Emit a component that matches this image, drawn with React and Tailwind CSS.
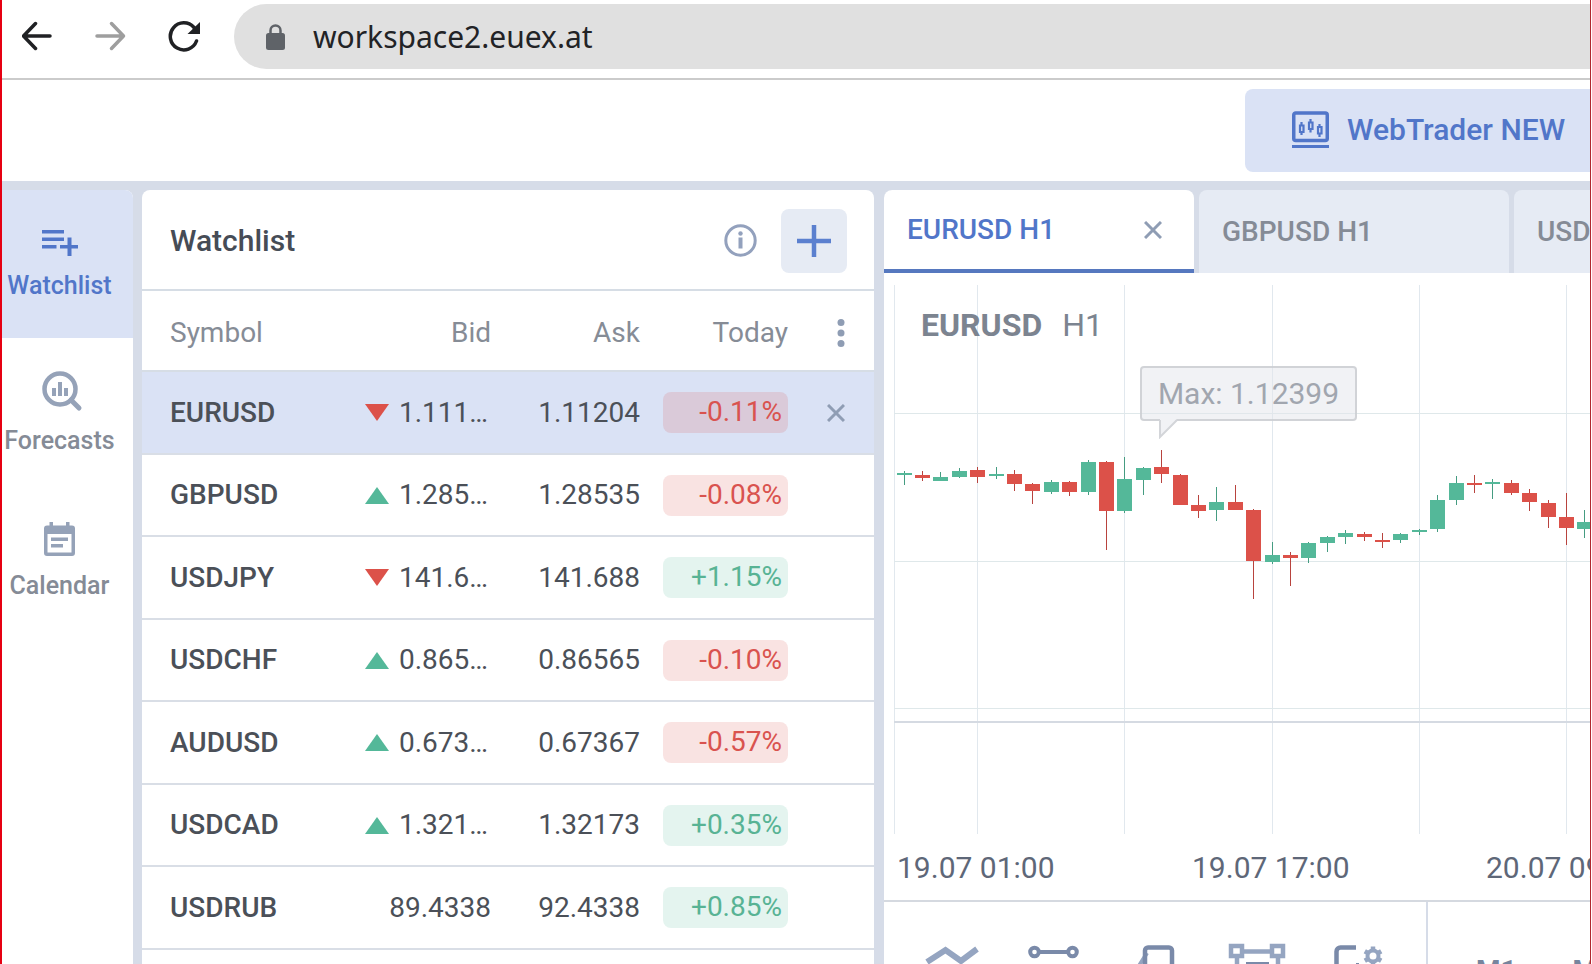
import React, { useState } from 'react';

const SYMBOLS = [
  { symbol: 'EURUSD', dir: 'down', bid: '1.111…', ask: '1.11204', today: '-0.11%' },
  { symbol: 'GBPUSD', dir: 'up', bid: '1.285…', ask: '1.28535', today: '-0.08%' },
  { symbol: 'USDJPY', dir: 'down', bid: '141.6…', ask: '141.688', today: '+1.15%' },
  { symbol: 'USDCHF', dir: 'up', bid: '0.865…', ask: '0.86565', today: '-0.10%' },
  { symbol: 'AUDUSD', dir: 'up', bid: '0.673…', ask: '0.67367', today: '-0.57%' },
  { symbol: 'USDCAD', dir: 'up', bid: '1.321…', ask: '1.32173', today: '+0.35%' },
  { symbol: 'USDRUB', dir: null, bid: '89.4338', ask: '92.4338', today: '+0.85%' },
];

// [x, body top, body bottom, high, low, rising]
const CANDLES = [
  [13, 200, 202, 198, 212, 1],
  [31, 202, 205, 198, 208, 0],
  [49, 204, 208, 199, 208, 1],
  [68, 198, 204, 195, 205, 1],
  [86, 197, 204, 194, 210, 0],
  [105, 201, 203, 194, 206, 1],
  [123, 201, 211, 197, 218, 0],
  [141, 211, 218, 210, 231, 0],
  [160, 209, 219, 207, 221, 1],
  [178, 209, 219, 208, 223, 0],
  [197, 189, 219, 187, 222, 1],
  [215, 189, 238, 188, 277, 0],
  [233, 206, 238, 184, 240, 1],
  [252, 195, 207, 194, 222, 1],
  [270, 194, 201, 177, 210, 0],
  [289, 202, 232, 201, 232, 0],
  [307, 232, 238, 222, 245, 0],
  [325, 229, 237, 214, 248, 1],
  [344, 229, 237, 212, 237, 0],
  [362, 237, 288, 236, 326, 0],
  [381, 282, 289, 269, 291, 1],
  [399, 282, 285, 279, 313, 0],
  [417, 270, 285, 269, 290, 1],
  [436, 264, 270, 263, 279, 1],
  [454, 260, 264, 257, 271, 1],
  [473, 261, 264, 259, 268, 0],
  [491, 267, 269, 260, 275, 0],
  [509, 261, 267, 260, 270, 1],
  [528, 257, 259, 256, 262, 1],
  [546, 227, 256, 222, 259, 1],
  [565, 210, 227, 203, 232, 1],
  [583, 210, 212, 202, 220, 0],
  [601, 209, 211, 206, 226, 1],
  [620, 210, 220, 207, 222, 0],
  [638, 220, 229, 216, 238, 0],
  [657, 230, 244, 227, 255, 0],
  [675, 244, 255, 220, 272, 0],
  [693, 249, 256, 237, 265, 1],
];

const GRID_X = [10, 93, 240, 388, 535, 682];
const GRID_Y = [140, 288, 435];

function CloseIcon() {
  return (
    <svg width="18" height="18" viewBox="0 0 18 18" fill="none" stroke="#8f9db4" strokeWidth="3">
      <path d="M1 1l16 16M17 1L1 17" />
    </svg>
  );
}

function BrowserBar() {
  return (
    <div className="flex h-20 items-start border-b-2 border-[#cbcbcb] bg-white pt-1">
      <div className="flex h-16 w-[232px] shrink-0 items-center gap-[42px] pl-5">
        <button type="button" aria-label="Back">
          <svg width="31" height="30" viewBox="0 0 31 30" fill="none" stroke="#202124" strokeWidth="3.500" strokeLinecap="round" strokeLinejoin="round">
            <path d="M28 15H1.500M13.500 2.500L1.500 15L13.500 27.500" />
          </svg>
        </button>
        <button type="button" aria-label="Forward">
          <svg width="31" height="30" viewBox="0 0 31 30" fill="none" stroke="#9e9e9e" strokeWidth="3.500" strokeLinecap="round" strokeLinejoin="round">
            <path d="M2 15H28.500M16.500 2.500L28.500 15L16.500 27.500" />
          </svg>
        </button>
        <button type="button" aria-label="Reload">
          <svg width="34" height="32" viewBox="0 0 34 32" fill="none">
            <path d="M28.500 21A13.500 13.500 0 1 1 26 7.500" stroke="#202124" strokeWidth="3.500" strokeLinecap="round" />
            <path d="M32 2v12H19.500z" fill="#202124" />
          </svg>
        </button>
      </div>
      <div className="flex h-[65px] flex-1 items-center gap-7 rounded-l-full bg-[#e0e0e0] pl-8">
        <svg width="19" height="26" viewBox="0 0 19 26" fill="none" className="shrink-0">
          <rect y="9" width="19" height="17" rx="2.500" fill="#5f6368" />
          <path d="M4.500 10V6.500a5 5 0 0 1 10 0V10" stroke="#5f6368" strokeWidth="2.500" />
        </svg>
        <input
          aria-label="Address"
          defaultValue="workspace2.euex.at"
          className="min-w-0 flex-1 bg-transparent font-['Noto_Sans'] text-[30px] leading-9 text-[#222326] outline-none"
        />
      </div>
    </div>
  );
}

function TopBar() {
  return (
    <header className="flex h-[101px] items-center justify-end bg-white">
      <button type="button" className="flex h-[83px] w-[345px] items-center gap-[18px] rounded-l-lg bg-[#dae2f5] pb-0.5 pl-[47px] text-[30px] font-medium text-[#5176c9]">
        <svg width="37" height="37" viewBox="0 0 37 37" fill="none" stroke="#5176c9">
          <rect x="1.750" y="2" width="33.500" height="27.500" rx="2" strokeWidth="3.500" />
          <path d="M0 35.500h37" strokeWidth="3" />
          <path d="M9.500 11v3M9.500 21v3M18.500 8v3M18.500 18v3.500M27.500 13v3M27.500 22.500v3.500" strokeWidth="2.200" />
          <path d="M8 14.500h3.500v6.500H8zM17 11.500h3.500v6.500H17zM26 16h3.500v6.500H26z" strokeWidth="2.200" />
        </svg>
        WebTrader NEW
      </button>
    </header>
  );
}

function NavIcon({ name }) {
  if (name === 'Watchlist') {
    return (
      <svg width="36" height="26" viewBox="0 0 36 26" fill="#5176c9">
        <path d="M0 0h22v3.500H0zM0 7.500h22V11H0zM0 15h14.500v3.500H0z" />
        <path d="M25.500 7.500h4V15H36v3.500h-6.500V26h-4v-7.500H18V15h7.500z" />
      </svg>
    );
  }
  if (name === 'Forecasts') {
    return (
      <svg width="40" height="40" viewBox="-2 0 40 40" fill="none" stroke="#95a2b8" className="overflow-visible">
        <circle cx="18" cy="18" r="15.500" strokeWidth="4.500" />
        <path d="M29 29l8 8" strokeWidth="5" strokeLinecap="round" />
        <path d="M12 17v8M18 11v14M24 17v8" strokeWidth="4" />
      </svg>
    );
  }
  return (
    <svg width="31" height="34" viewBox="0 0 31 34">
      <path
        fill="#95a2b8"
        fillRule="evenodd"
        d="M5.500 0h3.500v3.500h13V0h3.500v3.500H28a3 3 0 0 1 3 3V31a3 3 0 0 1-3 3H3a3 3 0 0 1-3-3V6.500a3 3 0 0 1 3-3h2.500zM3.500 12v18.500h24V12zM7 15.500h17V19H7zM7 22h12v3.500H7z"
      />
    </svg>
  );
}

function Sidebar({ active, onSelect }) {
  return (
    <nav className="mr-[9px] w-[131px] shrink-0 overflow-hidden rounded-tr-lg bg-white">
      {['Watchlist', 'Forecasts', 'Calendar'].map((name) => (
        <button
          key={name}
          type="button"
          onClick={() => onSelect(name)}
          className={
            'flex h-[148px] w-full flex-col items-center justify-center gap-[18px] pr-4 text-[25px] leading-6 font-medium ' +
            (name === active ? 'bg-[#dae2f5] text-[#5176c9]' : 'text-[#858b96]')
          }
        >
          <NavIcon name={name} />
          {name}
        </button>
      ))}
    </nav>
  );
}

function Arrow({ dir }) {
  return (
    <svg width="24" height="17" viewBox="0 0 24 17" className="shrink-0">
      {dir === 'up' ? <path d="M0 17L12 0l12 17z" fill="#54b899" /> : <path d="M0 0h24L12 17z" fill="#dc5149" />}
    </svg>
  );
}

function Watchlist() {
  const [selected, setSelected] = useState('EURUSD');

  return (
    <section className="mr-2.5 w-[732px] shrink-0 overflow-hidden rounded-t-lg bg-white">
      <div className="flex h-[101px] items-center border-b-2 border-[#d6dde5] pt-0.5 pr-[27px] pl-7">
        <h2 className="flex-1 text-[30px] font-medium text-[#464c56]">Watchlist</h2>
        <button type="button" aria-label="Info" className="mr-6">
          <svg width="33" height="33" viewBox="0 0 33 33" fill="#93a1bd">
            <circle cx="16.500" cy="16.500" r="14.700" fill="none" stroke="#93a1bd" strokeWidth="3" />
            <circle cx="16.500" cy="9.500" r="2.200" />
            <path d="M14.500 13.500h4v11h-4z" />
          </svg>
        </button>
        <button type="button" aria-label="Add symbol" className="flex h-16 w-[66px] items-center justify-center rounded-lg bg-[#e6ebf4]">
          <svg width="34" height="32" viewBox="0 0 34 32" stroke="#5b80cf" strokeWidth="4.500">
            <path d="M0 16h34M17 0v32" />
          </svg>
        </button>
      </div>

      <table className="w-full table-fixed border-collapse text-[28px] text-[#4b5058]">
        <colgroup>
          <col className="w-[216px]" />
          <col className="w-[133px]" />
          <col className="w-[149px]" />
          <col className="w-[148px]" />
          <col />
        </colgroup>
        <thead>
          <tr className="h-20 border-b-2 border-[#d6dde5] text-[#868c96]">
            <th scope="col" className="pt-1 pl-7 text-left font-normal">Symbol</th>
            <th scope="col" className="pt-1 text-right font-normal">Bid</th>
            <th scope="col" className="pt-1 text-right font-normal">Ask</th>
            <th scope="col" className="pt-1 text-right font-normal">Today</th>
            <th scope="col" className="pt-1 pr-[29px]">
              <button type="button" aria-label="Columns" className="ml-auto block">
                <svg width="8" height="28" viewBox="0 0 8 28" fill="#8f9db4">
                  <circle cx="4" cy="3.500" r="3.500" />
                  <circle cx="4" cy="14" r="3.500" />
                  <circle cx="4" cy="24.500" r="3.500" />
                </svg>
              </button>
            </th>
          </tr>
        </thead>
        <tbody>
          {SYMBOLS.map((row) => (
            <tr
              key={row.symbol}
              onClick={() => setSelected(row.symbol)}
              className={
                'border-b-2 border-[#d9dee6] odd:h-[83px] even:h-[82px] ' +
                (row.symbol === selected ? 'bg-[#dae2f5]' : '')
              }
            >
              <td className="pl-7 font-medium">{row.symbol}</td>
              <td>
                {row.dir ? (
                  <div className="flex items-center gap-2.5 pl-[7px]">
                    <Arrow dir={row.dir} />
                    <span>{row.bid}</span>
                  </div>
                ) : (
                  <div className="text-right">{row.bid}</div>
                )}
              </td>
              <td className="text-right">{row.ask}</td>
              <td>
                <div
                  className={
                    'ml-auto h-[41px] w-[125px] rounded-lg pr-1.5 text-right leading-10 ' +
                    (row.today[0] === '-' ? 'bg-[#dc5149]/16 text-[#d9534f]' : 'bg-[#54b899]/16 text-[#58b394]')
                  }
                >
                  {row.today}
                </div>
              </td>
              <td className="pr-[29px]">
                {row.symbol === selected && (
                  <button type="button" aria-label="Remove" className="ml-auto block">
                    <CloseIcon />
                  </button>
                )}
              </td>
            </tr>
          ))}
        </tbody>
      </table>
    </section>
  );
}

function Tabs() {
  return (
    <div className="flex h-[83px] gap-[5px] bg-[#d6dce8] text-[28px] font-medium">
      <div className="flex w-[310px] shrink-0 items-center justify-between rounded-t-lg border-b-4 border-[#5678bf] bg-white pr-8 pl-[23px]">
        <a href="#eurusd" className="text-[#5176c9]">EURUSD H1</a>
        <button type="button" aria-label="Close tab">
          <CloseIcon />
        </button>
      </div>
      <a href="#gbpusd" className="flex w-[310px] shrink-0 items-center rounded-t-lg bg-[#e6ebf4] pl-[23px] text-[#858b96]">GBPUSD H1</a>
      <a href="#usdjpy" className="flex w-[310px] shrink-0 items-center rounded-t-lg bg-[#e6ebf4] pl-[23px] text-[#858b96]">USDJPY H1</a>
    </div>
  );
}

function Chart() {
  return (
    <div className="relative h-[627px] overflow-hidden">
      <svg width="100%" height="561" shapeRendering="crispEdges" className="block">
        {GRID_X.map((x) => (
          <rect key={x} x={x} y="12" width="1" height="549" fill="#e1e8ee" />
        ))}
        {GRID_Y.map((y) => (
          <rect key={y} x="10" y={y} width="100%" height="1" fill="#dfe8ea" />
        ))}
        <rect x="10" y="448" width="100%" height="2" fill="#d5dae2" />
        {CANDLES.map(([x, top, bottom, high, low, rising]) => (
          <g key={x}>
            <rect x={x + 7} y={high} width="1" height={low - high} fill={rising ? '#459c81' : '#b8433e'} />
            <rect x={x} y={top} width="15" height={bottom - top} fill={rising ? '#54b899' : '#dc5149'} />
          </g>
        ))}
      </svg>

      <div className="absolute top-7 left-[37px] flex gap-5 text-[32px] leading-[48px] text-[#7c8490]">
        <strong className="font-bold">EURUSD</strong>
        <span>H1</span>
      </div>

      <div className="absolute top-[93px] left-64 flex h-[55px] w-[217px] items-center justify-center rounded border-2 border-[#c9ccd1]/80 bg-[#e3e5eb]/50 text-[30px] text-[#a1a6af]">
        Max: 1.12399
        <svg width="20" height="20" viewBox="0 0 20 20" className="absolute top-[51px] left-4">
          <path d="M2 0v17.500L19 0z" fill="#f1f2f5" />
          <path d="M2 1v17L19 1" fill="none" stroke="#d3d5d9" strokeWidth="2" />
        </svg>
      </div>

      <div className="flex pt-3.5 pl-[13px] text-[30px] leading-10 whitespace-nowrap text-[#5e6778]">
        <span className="w-[295px] shrink-0">19.07 01:00</span>
        <span className="w-[294px] shrink-0">19.07 17:00</span>
        <span className="w-[294px] shrink-0">20.07 09:00</span>
      </div>
    </div>
  );
}

const TOOLS = [
  {
    name: 'Chart type',
    icon: <path d="M1 17L19.500 5L35 16L51 4" stroke="#95a5c1" strokeWidth="6" />,
  },
  {
    name: 'Lines',
    icon: (
      <g stroke="#7a8aa9" strokeWidth="4">
        <circle cx="6.500" cy="7" r="4.300" />
        <circle cx="44.500" cy="7" r="4.300" />
        <path d="M11 7h29" />
      </g>
    ),
  },
  {
    name: 'Shapes',
    icon: (
      <g>
        <path d="M17 8L-3 40h20" stroke="#95a5c1" strokeWidth="4" />
        <rect x="15" y="2.500" width="27" height="40" rx="3" stroke="#7a8aa9" strokeWidth="4.500" />
      </g>
    ),
  },
  {
    name: 'Objects',
    icon: (
      <g>
        <path d="M9 6.500h33M5 12v30M46 12v30" stroke="#95a5c1" strokeWidth="4.500" />
        <rect x="-1" y="1" width="11" height="10" stroke="#95a5c1" strokeWidth="4.500" />
        <rect x="40" y="1" width="11" height="10" stroke="#95a5c1" strokeWidth="4.500" />
        <path d="M14 17h23v5H14z" fill="#7a8aa9" />
      </g>
    ),
  },
  {
    name: 'Chart settings',
    icon: (
      <g>
        <path d="M22 2.500H6.500a4 4 0 0 0-4 4V44h38V28" stroke="#7a8aa9" strokeWidth="4.500" />
        <path d="M22 18h3v10h-3z" fill="#7a8aa9" />
        <circle cx="39" cy="11" r="5.500" stroke="#95a5c1" strokeWidth="4" />
        <path d="M39 1.500v4M39 16.500v4M30.800 6.250l3.400 2M43.800 13.750l3.400 2M30.800 15.750l3.400-2M43.800 8.250l3.400-2" stroke="#95a5c1" strokeWidth="4.500" />
      </g>
    ),
  },
];

function Toolbar() {
  return (
    <div className="flex h-[140px] shrink-0 border-t-2 border-[#d5d9e0]">
      <div className="flex w-[544px] shrink-0 items-center justify-center border-r-2 border-[#d6dce8] pl-0.5">
        {TOOLS.map((tool) => (
          <button key={tool.name} type="button" aria-label={tool.name} className="flex h-full w-[102px] items-center justify-center">
            <svg width="52" height="52" viewBox="0 0 52 52" fill="none" className="overflow-visible">
              {tool.icon}
            </svg>
          </button>
        ))}
      </div>
      <div className="flex items-center gap-14 pl-12 text-[28px] font-bold text-[#77849d]">
        <button type="button">M1</button>
        <button type="button">M5</button>
      </div>
    </div>
  );
}

function App() {
  const [active, setActive] = useState('Watchlist');

  return (
    <div className="h-screen overflow-hidden bg-white pr-px font-[Roboto,sans-serif]">
      <div className="flex h-full flex-col border-r border-l-2 border-r-[#b0282d] border-l-[#e60012]">
        <BrowserBar />
        <TopBar />
        <main className="flex min-h-0 flex-1 bg-[#d6dce8] pt-[9px]">
          <Sidebar active={active} onSelect={setActive} />
          <Watchlist />
          <section className="min-w-0 flex-1 overflow-hidden rounded-tl-lg bg-white">
            <Tabs />
            <Chart />
            <Toolbar />
          </section>
        </main>
      </div>
    </div>
  );
}

export default App;
